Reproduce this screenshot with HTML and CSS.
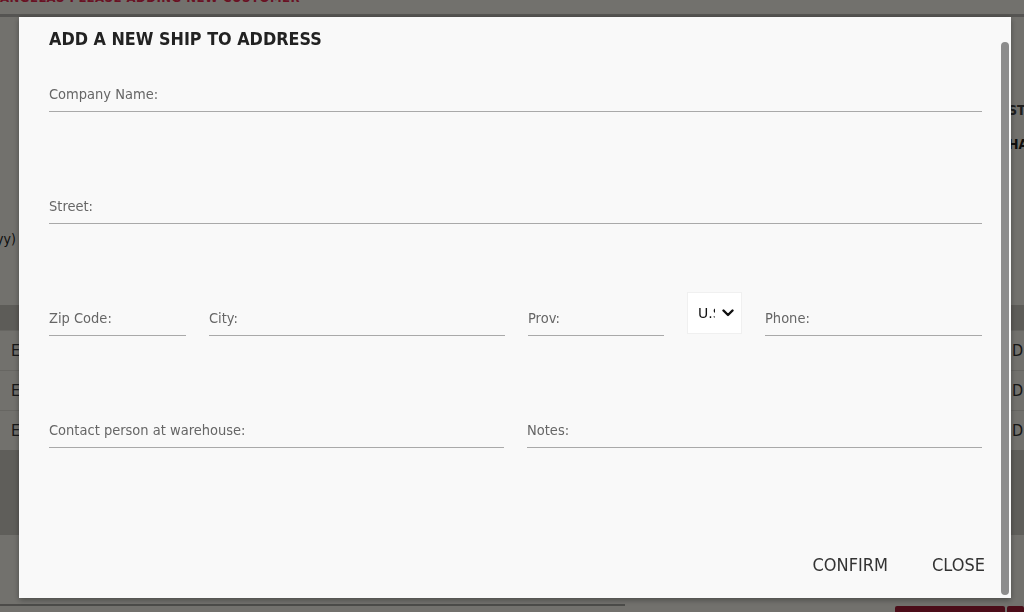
FILE: index.html
```html
<!DOCTYPE html>
<html>

<head>
    <link rel="stylesheet" href="styles.css">
</head>

<body>
    <div class="page">
        <div class="topbar">
            <div class="page-title">ANGELAS PLEASE ADDING NEW CUSTOMER</div>
        </div>
        <div class="bg-info">
            <div class="bg-left">yy)</div>
            <div class="bg-right">
                <div class="bg-right-head">STO</div>
                <div class="bg-right-val">HA</div>
            </div>
        </div>
        <div class="bg-table">
            <div class="bg-head"></div>
            <div class="bg-row"><span>E</span><span>D</span></div>
            <div class="bg-row"><span>E</span><span>D</span></div>
            <div class="bg-row"><span>E</span><span>D</span></div>
            <div class="bg-block"></div>
        </div>
        <div class="bg-footer">
            <div class="bg-line"></div>
            <div class="bg-buttons">
                <div class="bg-btn"></div>
                <div class="bg-btn small"></div>
            </div>
        </div>
    </div>

    <div class="overlay"></div>

    <div class="modal">
        <div class="modal-content">
            <h4>ADD A NEW SHIP TO ADDRESS</h4>

            <div class="form-row">
                <div class="field"><label>Company Name:</label></div>
            </div>

            <div class="form-row">
                <div class="field"><label>Street:</label></div>
            </div>

            <div class="form-row row-address">
                <div class="field"><label>Zip Code:</label></div>
                <div class="field"><label>City:</label></div>
                <div class="field"><label>Prov:</label></div>
                <div class="country">
                    <span class="country-text">U.S</span>
                    <svg class="chevron" viewBox="0 0 12 8" width="12" height="8">
                        <path d="M1.5 1.5 L6 6 L10.5 1.5" fill="none" stroke="#111" stroke-width="2.4" stroke-linecap="round" stroke-linejoin="round"/>
                    </svg>
                </div>
                <div class="field"><label>Phone:</label></div>
            </div>

            <div class="form-row row-half">
                <div class="field"><label>Contact person at warehouse:</label></div>
                <div class="field"><label>Notes:</label></div>
            </div>
        </div>

        <div class="modal-footer">
            <a class="btn-flat">CONFIRM</a>
            <a class="btn-flat">CLOSE</a>
        </div>

        <div class="scroll-thumb"></div>
    </div>
</body>

</html>
```

FILE: styles.css
```css
body {
    margin: 0;
    font-family: 'DejaVu Sans Condensed', 'DejaVu Sans', Verdana, sans-serif;
    background: #fdfbf2;
    overflow: hidden;
}

.page {
    width: 1024px;
    height: 612px;
}

.topbar {
    height: 14px;
    overflow: hidden;
    border-bottom: 3px solid #bdbbb5;
}

.page-title {
    margin-top: -9px;
    line-height: 14px;
    font-weight: bold;
    font-size: 13px;
    letter-spacing: 0.5px;
    color: #e8284f;
    white-space: nowrap;
}

.bg-info {
    height: 288px;
    display: flex;
    justify-content: space-between;
    font-size: 14px;
    color: #222;
}

.bg-left {
    padding-top: 214px;
    margin-left: -4px;
}

.bg-right {
    width: 16px;
    padding-top: 80px;
    overflow: hidden;
    white-space: nowrap;
}

.bg-right-head {
    height: 26px;
    line-height: 26px;
    font-weight: bold;
    color: #444;
}

.bg-right-val {
    padding-top: 13px;
    font-weight: bold;
}

.bg-table {
    font-size: 16px;
    color: #333;
}

.bg-head {
    height: 25px;
    background: #cfccc4;
}

.bg-row {
    height: 39px;
    border-top: 1px solid #e4e2da;
    display: flex;
    justify-content: space-between;
    align-items: center;
    padding: 0 0 0 11px;
}

.bg-row span:last-child {
    width: 12px;
    overflow: hidden;
}

.bg-block {
    height: 85px;
    background: #d3d1c8;
}

.bg-footer {
    padding-top: 69px;
}

.bg-line {
    width: 625px;
    height: 2px;
    background: #a8a7a2;
}

.bg-buttons {
    display: flex;
    gap: 2px;
    justify-content: flex-end;
}

.bg-btn {
    width: 110px;
    height: 10px;
    background: #a61d39;
    border-radius: 2px;
}

.bg-btn.small {
    width: 17px;
}

.overlay {
    position: fixed;
    inset: 0;
    background: rgba(0, 0, 0, 0.55);
}

.modal {
    position: fixed;
    left: 19px;
    top: 17px;
    width: 992px;
    height: 581px;
    background: #f9f9f9;
    box-shadow: 0 2px 6px rgba(0, 0, 0, 0.35);
    display: flex;
    flex-direction: column;
}

.modal-content {
    padding: 12px 29px 0 30px;
}

h4 {
    margin: 0 0 36px 0;
    font-size: 17.8px;
    line-height: 20px;
    font-weight: bold;
    color: #222;
}

.form-row {
    margin-bottom: 85px;
}

.row-address {
    display: grid;
    grid-template-columns: 137px 296px 136px 55px 1fr;
    grid-template-rows: 27px;
    column-gap: 23px;
    align-items: end;
}

.row-half {
    display: grid;
    grid-template-columns: 1fr 1fr;
    column-gap: 23px;
}

.field {
    padding-bottom: 8px;
    border-bottom: 1px solid #a9a9a9;
}

.field label {
    display: block;
    font-size: 14.5px;
    line-height: 18px;
    color: #666;
}

.country {
    height: 42px;
    margin-bottom: 2px;
    background: #fff;
    border: 1px solid #f0f0f0;
    box-sizing: border-box;
    display: flex;
    align-items: center;
    padding-left: 10px;
    gap: 7px;
}

.country-text {
    width: 17px;
    overflow: hidden;
    font-family: 'DejaVu Sans', sans-serif;
    font-size: 14px;
    color: #111;
    white-space: nowrap;
}

.modal-footer {
    margin-top: auto;
    display: flex;
    justify-content: flex-end;
    gap: 44px;
    padding: 0 26px 15px 0;
}

.btn-flat {
    font-size: 18px;
    line-height: 36px;
    color: #333;
}

.scroll-thumb {
    position: absolute;
    right: 2px;
    top: 25px;
    width: 8px;
    height: 553px;
    border-radius: 4px;
    background: #8c8c8c;
}
```
